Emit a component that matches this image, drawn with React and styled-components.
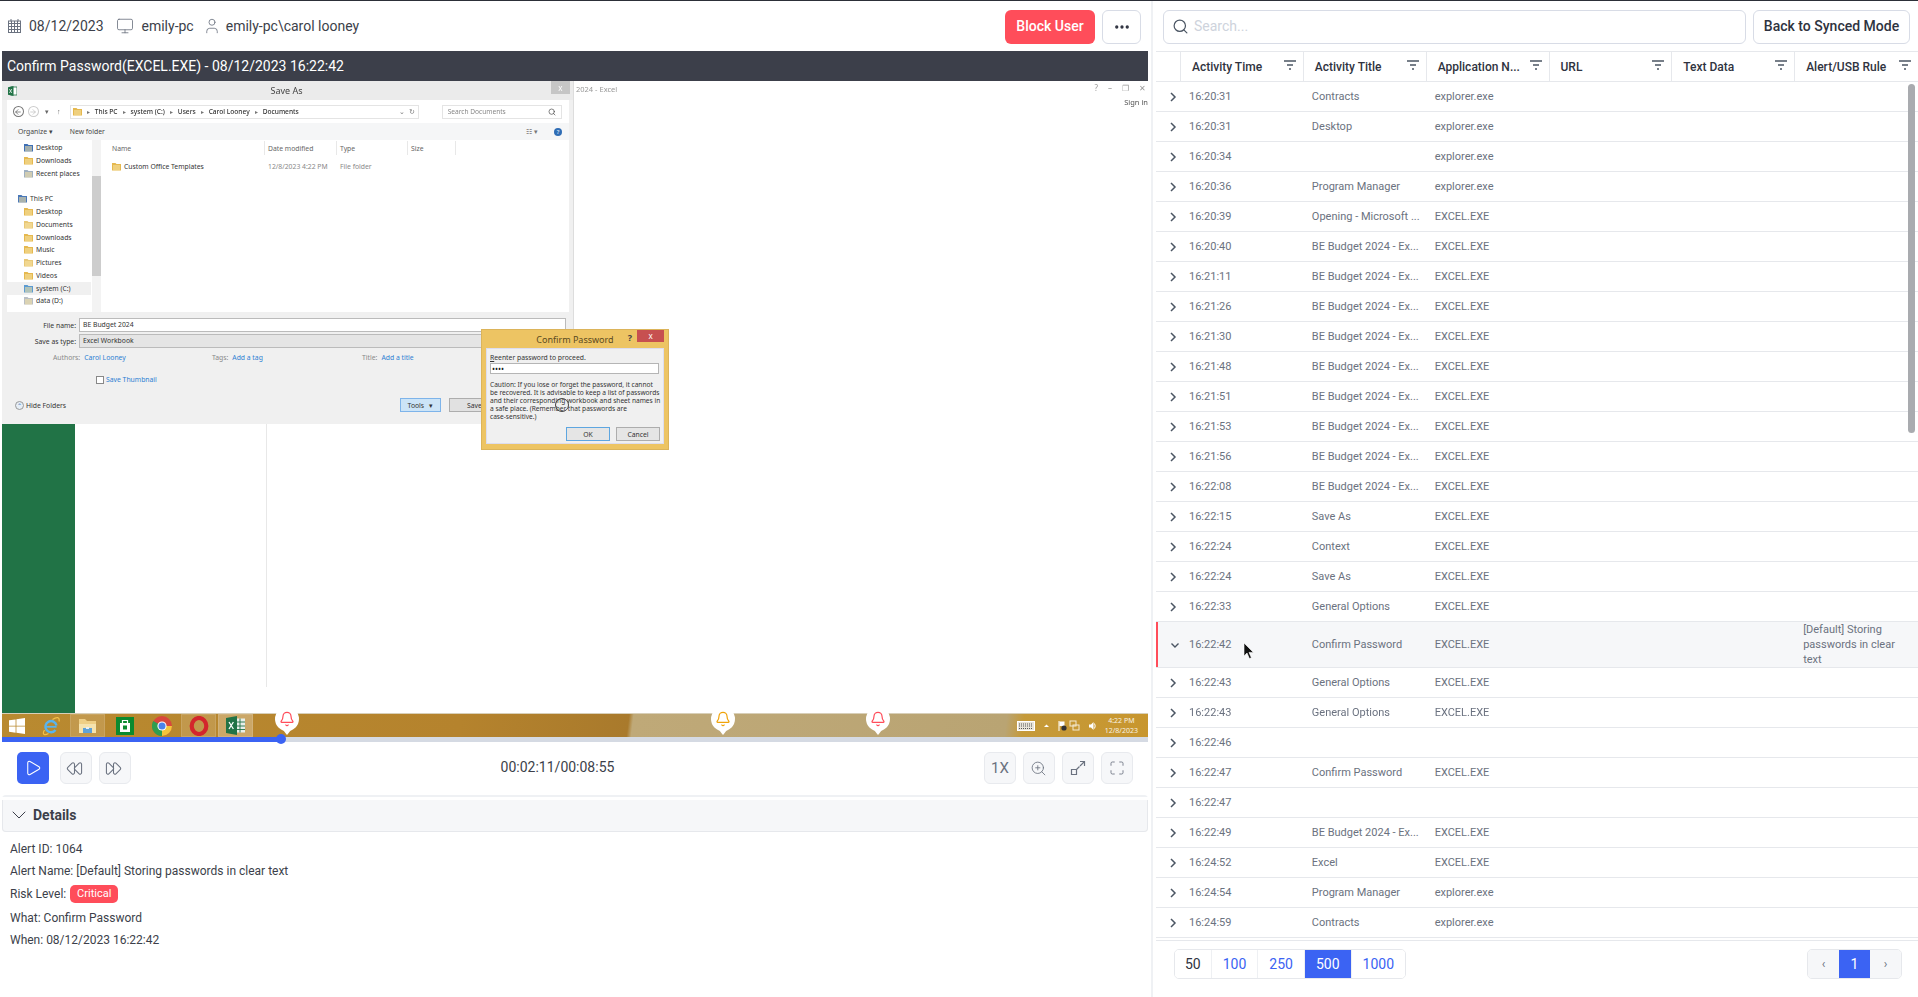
import React from "react";
import styled, { createGlobalStyle } from "styled-components";
import { Monitor, User, Search, Play, Rewind, FastForward, ZoomIn, Maximize, Bell, Ellipsis, ChevronDown, ArrowLeft, ArrowRight } from "lucide-react";

const GlobalStyle = createGlobalStyle`
    html, body {
        margin: 0;
        height: 100%;
        background: #fff;
        overflow: hidden;
    }
    body {
        font-family: Roboto, "Liberation Sans", sans-serif;
        color: #3c3f4a;
    }
    * { box-sizing: border-box; }
`;

const RED = "#ff4d5a";
const BLUE = "#3b63f3";
const LINE = "#e6e8ec";

const BUDGET = "BE Budget 2024 - Ex...";
const EXPLORER = "explorer.exe";
const EXCEL = "EXCEL.EXE";

const rows = [
    ["16:20:31", "Contracts", EXPLORER],
    ["16:20:31", "Desktop", EXPLORER],
    ["16:20:34", "", EXPLORER],
    ["16:20:36", "Program Manager", EXPLORER],
    ["16:20:39", "Opening - Microsoft ...", EXCEL],
    ["16:20:40", BUDGET, EXCEL],
    ["16:21:11", BUDGET, EXCEL],
    ["16:21:26", BUDGET, EXCEL],
    ["16:21:30", BUDGET, EXCEL],
    ["16:21:48", BUDGET, EXCEL],
    ["16:21:51", BUDGET, EXCEL],
    ["16:21:53", BUDGET, EXCEL],
    ["16:21:56", BUDGET, EXCEL],
    ["16:22:08", BUDGET, EXCEL],
    ["16:22:15", "Save As", EXCEL],
    ["16:22:24", "Context", EXCEL],
    ["16:22:24", "Save As", EXCEL],
    ["16:22:33", "General Options", EXCEL],
    ["16:22:42", "Confirm Password", EXCEL, "[Default] Storing passwords in clear text"],
    ["16:22:43", "General Options", EXCEL],
    ["16:22:43", "General Options", EXCEL],
    ["16:22:46", "", ""],
    ["16:22:47", "Confirm Password", EXCEL],
    ["16:22:47", "", ""],
    ["16:22:49", BUDGET, EXCEL],
    ["16:24:52", "Excel", EXCEL],
    ["16:24:54", "Program Manager", EXPLORER],
    ["16:24:59", "Contracts", EXPLORER],
];

const columns = ["Activity Time", "Activity Title", "Application N...", "URL", "Text Data", "Alert/USB Rule"];

const tree = [
    { label: "Desktop", color: "#3f6fb5" },
    { label: "Downloads", color: "#e5b84f" },
    { label: "Recent places", color: "#9fb0c0" },
    { label: "This PC", color: "#4a78b8", gap: true, root: true },
    { label: "Desktop", color: "#e5b84f" },
    { label: "Documents", color: "#e8c877" },
    { label: "Downloads", color: "#e5b84f" },
    { label: "Music", color: "#e5b84f" },
    { label: "Pictures", color: "#e8c877" },
    { label: "Videos", color: "#e5b84f" },
    { label: "system (C:)", color: "#5c9bd1", active: true },
    { label: "data (D:)", color: "#b9bec4" },
];

function CalendarIcon() {
    return (
        <svg width="13" height="14" viewBox="0 0 13 14" fill="none" stroke="#6b7280" strokeWidth="1">
            <rect x="0.5" y="2" width="12" height="11.5" />
            <path d="M0.5 4.5h12M0.5 7.5h12M0.5 10.5h12M3.5 2v11.5M6.5 2v11.5M9.5 2v11.5M3 0v2.5M10 0v2.5" />
        </svg>
    );
}

function FilterIcon() {
    return (
        <svg width="12" height="10" viewBox="0 0 12 10" fill="none" stroke="#4b5563" strokeWidth="1.3">
            <path d="M0 1h12M3 5h6M5 9h2" />
        </svg>
    );
}

function RowChevron({ open }) {
    if (open) {
        return (
            <svg width="10" height="8" viewBox="0 0 10 8" fill="none" stroke="#4b5563" strokeWidth="1.4">
                <path d="M1.5 2.5L5 6l3.5-3.5" />
            </svg>
        );
    }
    return (
        <svg width="8" height="10" viewBox="0 0 8 10" fill="none" stroke="#4b5563" strokeWidth="1.5">
            <path d="M2 1l4 4-4 4" />
        </svg>
    );
}

function ResizeIcon() {
    return (
        <svg width="16" height="16" viewBox="0 0 16 16" fill="none" stroke="#6b7280" strokeWidth="1.2">
            <path d="M1.5 9.5h5v5h-5zM9.5 6.5l-3 3M10 1.5h4.5V6M14.5 1.5L10 6" />
        </svg>
    );
}

function FolderIcon({ color = "#e5b84f" }) {
    return (
        <svg width="9" height="9" viewBox="0 0 9 9">
            <path d="M0 1h3.5l1 1H9v6.5H0z" fill={color} />
            <path d="M1 3h7v5.5H1z" fill="#f7e3a6" opacity="0.55" />
        </svg>
    );
}

function MouseCursor() {
    return (
        <svg width="12" height="17" viewBox="0 0 12 17">
            <path d="M1 0v13l3-3 2.4 5.6 2-.9L6 9.4h4.4z" fill="#111" stroke="#fff" strokeWidth="0.6" />
        </svg>
    );
}

function ExcelBadge({ size = 9 }) {
    return (
        <svg width={size} height={size + 1} viewBox="0 0 9 10">
            <rect x="3" y="1" width="6" height="8" fill="#fff" stroke="#217346" strokeWidth="0.8" />
            <path d="M0 1.2l5.5-1.2v10L0 8.8z" fill="#217346" />
            <path d="M1.4 3l2.4 4M3.8 3L1.4 7" stroke="#fff" strokeWidth="0.7" />
        </svg>
    );
}

function StartLogo() {
    return (
        <svg width="16" height="16" viewBox="0 0 16 16" fill="#fff">
            <path d="M0 2.3l6.6-.9v6.3H0zM7.4 1.3L16 0v7.7H7.4zM0 8.4h6.6v6.3L0 13.8zM7.4 8.4H16V16l-8.6-1.2z" />
        </svg>
    );
}

function IeLogo() {
    return (
        <svg width="20" height="20" viewBox="0 0 20 20" fill="none">
            <path d="M15.5 9.5A5.6 5.6 0 1 0 14.5 14" stroke="#58b4ee" strokeWidth="2.4" />
            <path d="M5 10.8h10.6" stroke="#58b4ee" strokeWidth="1.8" />
            <path d="M3.5 14C1 18 3 20 7.5 17.5M11.5 3.5c4.5-3 7.5-2.5 6.5 2" stroke="#f2c14a" strokeWidth="1.2" />
        </svg>
    );
}

function ExplorerLogo() {
    return (
        <svg width="19" height="18" viewBox="0 0 19 18">
            <path d="M1 2h6l2 2h9v12H1z" fill="#efcf86" />
            <path d="M1 7h17v9H1z" fill="#f6e3ae" />
            <path d="M5 11h9v5H5z" fill="#5fa2d8" />
            <path d="M8 10h3v2H8z" fill="#e9eef3" />
        </svg>
    );
}

function StoreLogo() {
    return (
        <svg width="18" height="18" viewBox="0 0 18 18">
            <rect width="18" height="18" fill="#0b8a2f" />
            <path d="M4 6h10v9H4z" fill="#fff" />
            <path d="M6.5 6V3.5h5V6" stroke="#fff" strokeWidth="1.2" fill="none" />
            <rect x="7" y="8.5" width="4" height="4" fill="#0b8a2f" />
        </svg>
    );
}

function ChromeLogo() {
    return (
        <svg width="20" height="20" viewBox="0 0 20 20">
            <circle cx="10" cy="10" r="10" fill="#d9473c" />
            <path d="M10 10L1.3 5A10 10 0 0 0 10 20z" fill="#2f9e4f" />
            <path d="M10 10h10A10 10 0 0 1 10 20z" fill="#f3c53c" />
            <circle cx="10" cy="10" r="4.6" fill="#fff" />
            <circle cx="10" cy="10" r="3.5" fill="#4c82ea" />
        </svg>
    );
}

function OperaLogo() {
    return (
        <svg width="20" height="20" viewBox="0 0 20 20" fill="none">
            <ellipse cx="10" cy="10" rx="7.3" ry="8" stroke="#d3262c" strokeWidth="4.2" />
        </svg>
    );
}

function ExcelLogo() {
    return (
        <svg width="19" height="19" viewBox="0 0 19 19">
            <rect x="7" y="2.5" width="12" height="14" fill="#e8efe9" />
            <path d="M10 2.5v14M14 2.5v14M7 6h12M7 10h12M7 13.5h12" stroke="#217346" strokeWidth="0.9" />
            <path d="M0 2l11-2v19L0 17z" fill="#217346" />
            <path d="M3 6l4.4 7M7.4 6L3 13" stroke="#fff" strokeWidth="1.3" />
        </svg>
    );
}

function KeyboardIcon() {
    return (
        <svg width="18" height="10" viewBox="0 0 18 10">
            <rect x="0.5" y="0.5" width="17" height="9" fill="#e8e4d8" stroke="#fff" />
            <path d="M2 3h14M2 5h14M2 7.5h14" stroke="#555" strokeDasharray="1 1" strokeWidth="1" />
        </svg>
    );
}

function TrayGlyphs() {
    return (
        <svg width="52" height="12" viewBox="0 0 52 12">
            <path d="M0 7l2.5-2.5L5 7z" fill="#fff" />
            <path d="M15 1v10" stroke="#fff" strokeWidth="1" />
            <path d="M15.5 1.5h5v4.5h-5z" fill="#fff" />
            <circle cx="20" cy="8" r="2.6" fill="#333" />
            <rect x="26" y="1" width="6" height="5" fill="none" stroke="#f4ead2" />
            <rect x="29" y="5" width="6" height="5" fill="none" stroke="#f4ead2" />
            <path d="M45 4.5h2l2.5-2.5v8L47 7.5h-2z" fill="#fff" />
            <path d="M50.5 3.5q1.4 2.5 0 5" stroke="#fff" fill="none" />
        </svg>
    );
}

export default function App() {
    return (
        <Page>
            <GlobalStyle />
            <LeftPanel>
                <TopBar>
                    <SessionInfo>
                        <InfoItem><CalendarIcon />08/12/2023</InfoItem>
                        <InfoItem><Monitor size={18} strokeWidth={1.1} color="#6b7280" />emily-pc</InfoItem>
                        <InfoItem><UserGlyph size={18} strokeWidth={1.1} color="#6b7280" />emily-pc\carol looney</InfoItem>
                    </SessionInfo>
                    <TopActions>
                        <DangerButton>Block User</DangerButton>
                        <MoreButton><Ellipsis size={18} strokeWidth={2.4} color="#2f3340" /></MoreButton>
                    </TopActions>
                </TopBar>

                <ScreenTitle>Confirm Password(EXCEL.EXE) - 08/12/2023 16:22:42</ScreenTitle>
                <Screen>
                    <Desktop>
                        <ExcelBack>
                            <ExcelTitleText>2024 - Excel</ExcelTitleText>
                            <ExcelWindowControls>
                                <span>?</span><span>–</span><span>❐</span><span>✕</span>
                            </ExcelWindowControls>
                            <SignIn>Sign in</SignIn>
                            <ExcelSideBar />
                            <ExcelRule />
                        </ExcelBack>

                        <SaveWindow>
                            <WinTitle>
                                <ExcelBadge />
                                <WinTitleText>Save As</WinTitleText>
                                <WinClose>x</WinClose>
                            </WinTitle>
                            <NavBar>
                                <NavCircle><ArrowLeft size={8} strokeWidth={2} color="#555" /></NavCircle>
                                <NavCircle $faded><ArrowRight size={8} strokeWidth={2} color="#bbb" /></NavCircle>
                                <NavArrow>▾</NavArrow>
                                <NavArrow>↑</NavArrow>
                                <AddressBox>
                                    <FolderIcon />
                                    <Crumb>▸</Crumb><b>This PC</b>
                                    <Crumb>▸</Crumb><b>system (C:)</b>
                                    <Crumb>▸</Crumb><b>Users</b>
                                    <Crumb>▸</Crumb><b>Carol Looney</b>
                                    <Crumb>▸</Crumb><b>Documents</b>
                                    <AddressEnd>⌄ &nbsp;↻</AddressEnd>
                                </AddressBox>
                                <SearchBox>Search Documents<Search size={8} strokeWidth={2} color="#444" /></SearchBox>
                            </NavBar>
                            <WinToolbar>
                                <span>Organize ▾</span>
                                <span>New folder</span>
                                <ToolbarEnd>
                                    <span>☷ ▾</span>
                                    <HelpDot>?</HelpDot>
                                </ToolbarEnd>
                            </WinToolbar>
                            <Browser>
                                <TreePane>
                                    {tree.map((item, index) => (
                                        <TreeItem key={index} $gap={item.gap} $root={item.root} $active={item.active}>
                                            <FolderIcon color={item.color} />{item.label}
                                        </TreeItem>
                                    ))}
                                    <TreeScroll><TreeThumb /></TreeScroll>
                                </TreePane>
                                <FilePane>
                                    <FileHead>
                                        <FileCol $w={153}>Name</FileCol>
                                        <FileCol $w={69}>Date modified</FileCol>
                                        <FileCol $w={68}>Type</FileCol>
                                        <FileCol $w={45}>Size</FileCol>
                                    </FileHead>
                                    <FileRow>
                                        <FileName $w={153}><FolderIcon />Custom Office Templates</FileName>
                                        <FileMeta $w={69}>12/8/2023 4:22 PM</FileMeta>
                                        <FileMeta $w={68}>File folder</FileMeta>
                                    </FileRow>
                                </FilePane>
                            </Browser>
                            <SaveForm>
                                <FormRow>
                                    <FormLabel>File name:</FormLabel>
                                    <FormInput><span>BE Budget 2024</span></FormInput>
                                </FormRow>
                                <FormRow>
                                    <FormLabel>Save as type:</FormLabel>
                                    <FormInput $select><span>Excel Workbook</span></FormInput>
                                </FormRow>
                                <MetaRow>
                                    <MetaCell $w={159}><MetaLabel>Authors:</MetaLabel><MetaLink>Carol Looney</MetaLink></MetaCell>
                                    <MetaCell $w={150}><MetaLabel>Tags:</MetaLabel><MetaLink>Add a tag</MetaLink></MetaCell>
                                    <MetaCell $w={100}><MetaLabel>Title:</MetaLabel><MetaLink>Add a title</MetaLink></MetaCell>
                                </MetaRow>
                                <ThumbRow><ThumbBox /><MetaLink>Save Thumbnail</MetaLink></ThumbRow>
                                <FormFooter>
                                    <HideFolders><HideDot>⌃</HideDot>Hide Folders</HideFolders>
                                    <FormButtons>
                                        <WinButton $tools>Tools &nbsp; ▾</WinButton>
                                        <WinButton>Save</WinButton>
                                    </FormButtons>
                                </FormFooter>
                            </SaveForm>
                        </SaveWindow>

                        <ConfirmDialog>
                            <DialogTitle>
                                <DialogTitleText>Confirm Password</DialogTitleText>
                                <DialogHelp>?</DialogHelp>
                                <DialogClose>x</DialogClose>
                            </DialogTitle>
                            <DialogBody>
                                <DialogLine><u>R</u>eenter password to proceed.</DialogLine>
                                <DialogInput>••••</DialogInput>
                                <DialogNote>
                                    Caution: If you lose or forget the password, it cannot<br />
                                    be recovered. It is advisable to keep a list of passwords<br />
                                    and their corresponding workbook and sheet names in<br />
                                    a safe place.  (Remember that passwords are<br />
                                    case-sensitive.)
                                </DialogNote>
                                <DialogButtons>
                                    <DialogButton $primary>OK</DialogButton>
                                    <DialogButton>Cancel</DialogButton>
                                </DialogButtons>
                            </DialogBody>
                        </ConfirmDialog>
                        <CursorRing />
                    </Desktop>
                    <Taskbar>
                        <TaskSlot $w={30}><StartLogo /></TaskSlot>
                        <TaskSlot><IeLogo /></TaskSlot>
                        <TaskSlot $on><ExplorerLogo /></TaskSlot>
                        <TaskSlot><StoreLogo /></TaskSlot>
                        <TaskSlot><ChromeLogo /></TaskSlot>
                        <TaskSlot $on><OperaLogo /></TaskSlot>
                        <TaskSlot $on $light><ExcelLogo /></TaskSlot>
                        <Tray>
                            <KeyboardIcon />
                            <TrayGlyphs />
                            <TrayClock>4:22 PM<br />12/8/2023</TrayClock>
                        </Tray>
                    </Taskbar>
                </Screen>

                <Progress>
                    <ProgressFill />
                    <Marker $x={272.5}><Bell size={16} strokeWidth={1.8} color={RED} /></Marker>
                    <Marker $x={709}><Bell size={16} strokeWidth={1.8} color="#f0a30a" /></Marker>
                    <Marker $x={864}><Bell size={16} strokeWidth={1.8} color={RED} /></Marker>
                </Progress>

                <Controls>
                    <ControlGroup>
                        <PlayButton><Play size={18} strokeWidth={1.4} color="#fff" /></PlayButton>
                        <SeekButton $nudge><Rewind size={17} strokeWidth={1.5} color="#6b7280" /></SeekButton>
                        <SeekButton $nudge><FastForward size={17} strokeWidth={1.5} color="#6b7280" /></SeekButton>
                    </ControlGroup>
                    <TimeText>00:02:11/00:08:55</TimeText>
                    <ControlGroup>
                        <SeekButton $text>1X</SeekButton>
                        <SeekButton><ZoomIn size={17} strokeWidth={1.2} color="#6b7280" /></SeekButton>
                        <SeekButton><ResizeIcon /></SeekButton>
                        <SeekButton><Maximize size={16} strokeWidth={1.3} color="#6b7280" /></SeekButton>
                    </ControlGroup>
                </Controls>

                <DetailsHeader>
                    <ChevronDown size={24} strokeWidth={1} color="#3c3f4a" />
                    Details
                </DetailsHeader>
                <DetailsBody>
                    <DetailLine>Alert ID: 1064</DetailLine>
                    <DetailLine>Alert Name: [Default] Storing passwords in clear text</DetailLine>
                    <RiskLine>Risk Level: <RiskBadge>Critical</RiskBadge></RiskLine>
                    <DetailLine>What: Confirm Password</DetailLine>
                    <DetailLine>When: 08/12/2023 16:22:42</DetailLine>
                </DetailsBody>
            </LeftPanel>

            <RightPanel>
                <SearchBar>
                    <SearchField>
                        <Search size={17} strokeWidth={1.7} color="#4b5563" />
                        <SearchPlaceholder>Search...</SearchPlaceholder>
                    </SearchField>
                    <OutlineButton>Back to Synced Mode</OutlineButton>
                </SearchBar>

                <TableWrap>
                    <HeadRow>
                        <HeadCell />
                        {columns.map((title) => (
                            <HeadCell key={title}>
                                <span>{title}</span>
                                <FilterIcon />
                            </HeadCell>
                        ))}
                    </HeadRow>
                    <TableBody>
                        {rows.map(([time, title, app, alert], index) => (
                            <Row key={index} $open={Boolean(alert)}>
                                <ChevronCell $open={Boolean(alert)}><RowChevron open={Boolean(alert)} /></ChevronCell>
                                <Cell>{time}</Cell>
                                <Cell>{title}</Cell>
                                <Cell>{app}</Cell>
                                <Cell />
                                <Cell />
                                <AlertCell>{alert}</AlertCell>
                            </Row>
                        ))}
                        <ScrollThumb />
                        <CursorSpot><MouseCursor /></CursorSpot>
                    </TableBody>
                </TableWrap>

                <TableFooter>
                    <PageSizes>
                        <SizeButton $plain>50</SizeButton>
                        <SizeButton>100</SizeButton>
                        <SizeButton>250</SizeButton>
                        <SizeButton $active>500</SizeButton>
                        <SizeButton $last>1000</SizeButton>
                    </PageSizes>
                    <Pager>
                        <PagerArrow>‹</PagerArrow>
                        <PagerCurrent>1</PagerCurrent>
                        <PagerArrow>›</PagerArrow>
                    </Pager>
                </TableFooter>
            </RightPanel>
        </Page>
    );
}

const Page = styled.div`
    display: flex;
    width: 1918px;
    height: 997px;
    border-top: 1px solid #2c2f38;
    overflow: hidden;
`;

const LeftPanel = styled.div`
    width: 1153px;
    flex: none;
    display: flex;
    flex-direction: column;
    padding: 0 3px 0 2px;
    border-right: 2px solid #eff1f4;
`;

const TopBar = styled.div`
    height: 50px;
    flex: none;
    display: flex;
    align-items: flex-start;
    justify-content: space-between;
    padding: 9px 7px 0 6px;
`;

const SessionInfo = styled.div`
    display: flex;
    align-items: center;
    height: 32px;
    gap: 12px;
`;

const InfoItem = styled.div`
    display: flex;
    align-items: center;
    gap: 8px;
    font-size: 14px;
    color: #3c3f4a;
`;

const UserGlyph = styled(User)`
    margin: 0 -3px 0 -3px;
`;

const TopActions = styled.div`
    display: flex;
    gap: 7px;
`;

const DangerButton = styled.button`
    width: 90px;
    height: 34px;
    padding: 0 0 2px;
    border: 0;
    border-radius: 6px;
    background: ${RED};
    color: #fff;
    font: 500 14px Roboto, sans-serif;
`;

const MoreButton = styled.button`
    width: 39px;
    height: 34px;
    display: flex;
    align-items: center;
    justify-content: center;
    background: #fff;
    border: 1px solid #d8dce6;
    border-radius: 6px;
`;

const ScreenTitle = styled.div`
    height: 30px;
    flex: none;
    display: flex;
    align-items: center;
    padding-left: 5px;
    background: #3c3f4a;
    color: #fff;
    font-size: 14px;
`;

const Screen = styled.div`
    height: 656px;
    flex: none;
    display: flex;
    flex-direction: column;
    font-family: "Noto Sans", sans-serif;
    overflow: hidden;
`;

const Desktop = styled.div`
    position: relative;
    flex: 1;
    background: #fff;
    filter: blur(0.3px);
`;

const ExcelBack = styled.div`
    position: absolute;
    inset: 0;
`;

const ExcelTitleText = styled.span`
    position: absolute;
    left: 574px;
    top: 3px;
    font-size: 7.5px;
    color: #999;
`;

const ExcelWindowControls = styled.div`
    position: absolute;
    right: 2px;
    top: 1px;
    display: flex;
    gap: 10px;
    font-size: 8px;
    color: #999;
`;

const SignIn = styled.span`
    position: absolute;
    right: 0;
    top: 16px;
    font-size: 7.5px;
    color: #555;
`;

const ExcelSideBar = styled.div`
    position: absolute;
    left: 0;
    top: 343px;
    bottom: 0;
    width: 73px;
    background: #217346;
`;

const ExcelRule = styled.div`
    position: absolute;
    left: 264px;
    top: 343px;
    height: 263px;
    width: 1px;
    background: #e8e8e8;
`;

const SaveWindow = styled.div`
    position: absolute;
    left: 0;
    top: 0;
    width: 572px;
    height: 343px;
    display: flex;
    flex-direction: column;
    background: #f0f0f0;
    padding: 0 4px 0 5px;
    border-right: 1px solid #ddd;
    font-size: 6.8px;
    color: #333;
`;

const WinTitle = styled.div`
    height: 19px;
    margin: 0 -4px 0 -5px;
    padding-left: 6px;
    flex: none;
    display: flex;
    align-items: center;
    justify-content: space-between;
    background: #ebebeb;
`;

const WinTitleText = styled.span`
    font-size: 9px;
    color: #444;
    margin-left: 5px;
`;

const WinClose = styled.span`
    align-self: flex-start;
    width: 19px;
    height: 13px;
    margin-right: 3px;
    display: flex;
    align-items: center;
    justify-content: center;
    background: #c6c6c6;
    color: #fff;
    font-size: 8px;
`;

const NavBar = styled.div`
    height: 23px;
    flex: none;
    display: flex;
    align-items: center;
    gap: 4px;
    padding: 0 7px 0 6px;
    background: #fff;
`;

const NavCircle = styled.span`
    width: 11px;
    height: 11px;
    border-radius: 50%;
    border: 1px solid ${(props) => (props.$faded ? "#ccc" : "#777")};
    display: flex;
    align-items: center;
    justify-content: center;
`;

const NavArrow = styled.span`
    width: 8px;
    text-align: center;
    font-size: 7px;
    color: #666;
`;

const AddressBox = styled.div`
    width: 351px;
    height: 14px;
    margin-left: 3px;
    display: flex;
    align-items: center;
    gap: 5px;
    padding-left: 2px;
    border: 1px solid #e4e4e4;
    font-size: 6.6px;
    color: #333;
    b { font-weight: 500; }
`;

const Crumb = styled.span`
    color: #777;
    font-size: 6px;
`;

const AddressEnd = styled.span`
    margin-left: auto;
    margin-right: 3px;
    color: #777;
`;

const SearchBox = styled.div`
    width: 121px;
    height: 14px;
    margin-left: 19px;
    display: flex;
    align-items: center;
    justify-content: space-between;
    padding: 0 5px;
    border: 1px solid #e4e4e4;
    font-size: 6.6px;
    color: #888;
`;

const WinToolbar = styled.div`
    height: 17px;
    flex: none;
    display: flex;
    align-items: center;
    gap: 17px;
    padding: 0 7px 0 11px;
    background: #f5f6f7;
    color: #444;
`;

const ToolbarEnd = styled.div`
    margin-left: auto;
    display: flex;
    align-items: center;
    gap: 16px;
    color: #777;
`;

const HelpDot = styled.span`
    width: 8px;
    height: 8px;
    border-radius: 50%;
    background: #2f6db5;
    color: #fff;
    font-size: 6px;
    line-height: 8px;
    text-align: center;
`;

const Browser = styled.div`
    height: 172px;
    flex: none;
    display: flex;
    background: #fff;
`;

const TreePane = styled.div`
    position: relative;
    width: 94px;
    flex: none;
    padding-top: 1.5px;
`;

const TreeItem = styled.div`
    height: 12.75px;
    display: flex;
    align-items: center;
    gap: 3px;
    width: 84px;
    margin-top: ${(props) => (props.$gap ? "12.75px" : "0")};
    padding-left: ${(props) => (props.$root ? "11px" : "17px")};
    background: ${(props) => (props.$active ? "#f0f0f0" : "transparent")};
    white-space: nowrap;
`;

const TreeScroll = styled.div`
    position: absolute;
    right: 0;
    top: 0;
    bottom: 0;
    width: 9px;
    background: #f3f3f3;
`;

const TreeThumb = styled.div`
    margin-top: 36px;
    height: 100px;
    background: #cdcdcd;
`;

const FilePane = styled.div`
    flex: 1;
    padding: 0 0 0 11px;
`;

const FileHead = styled.div`
    height: 18px;
    display: flex;
    align-items: flex-end;
    padding-bottom: 3px;
    color: #666;
`;

const FileCol = styled.div`
    width: ${(props) => props.$w}px;
    height: 14px;
    line-height: 15px;
    border-right: 1px solid #e8e8e8;
    padding-right: 3px;
    margin-right: 3px;
`;

const FileRow = styled.div`
    display: flex;
    align-items: center;
    height: 16px;
`;

const FileName = styled.div`
    width: ${(props) => props.$w + 3}px;
    display: flex;
    align-items: center;
    gap: 3px;
    color: #333;
`;

const FileMeta = styled.div`
    width: ${(props) => props.$w + 3}px;
    color: #888;
    white-space: nowrap;
`;

const SaveForm = styled.div`
    flex: 1;
    padding-top: 6px;
    background: #f0f0f0;
`;

const FormRow = styled.div`
    display: flex;
    align-items: center;
    height: 14px;
    margin-bottom: 2px;
`;

const FormLabel = styled.label`
    width: 72px;
    text-align: right;
    padding-right: 3px;
    color: #333;
`;

const FormInput = styled.div`
    width: 487px;
    height: 14px;
    padding-left: 3px;
    line-height: 12px;
    border: 1px solid #bbb;
    background: ${(props) => (props.$select ? "#e5e5e5" : "#fff")};
    color: #333;
`;

const MetaRow = styled.div`
    display: flex;
    margin-top: 5px;
    padding-left: 46px;
`;

const MetaCell = styled.div`
    width: ${(props) => props.$w}px;
    display: flex;
    gap: 4px;
`;

const MetaLabel = styled.span`
    color: #888;
`;

const MetaLink = styled.span`
    color: #2d7fd3;
`;

const ThumbRow = styled.div`
    display: flex;
    align-items: center;
    gap: 2px;
    margin-top: 13px;
    padding-left: 89px;
`;

const ThumbBox = styled.span`
    width: 8px;
    height: 8px;
    background: #fff;
    border: 1px solid #888;
`;

const FormFooter = styled.div`
    display: flex;
    align-items: center;
    justify-content: space-between;
    margin-top: 14px;
    padding-left: 8px;
`;

const HideFolders = styled.div`
    display: flex;
    align-items: center;
    gap: 2px;
    color: #333;
`;

const HideDot = styled.span`
    width: 9px;
    height: 9px;
    border-radius: 50%;
    border: 1px solid #999;
    background: #e6eef6;
    font-size: 6px;
    line-height: 9px;
    text-align: center;
    color: #2f6db5;
`;

const FormButtons = styled.div`
    display: flex;
    gap: 8px;
    margin-right: 8px;
`;

const WinButton = styled.div`
    width: ${(props) => (props.$tools ? "41px" : "112px")};
    height: 14px;
    display: flex;
    align-items: center;
    justify-content: ${(props) => (props.$tools ? "center" : "flex-start")};
    padding-left: ${(props) => (props.$tools ? "0" : "17px")};
    background: ${(props) => (props.$tools ? "#cce4f7" : "#e1e1e1")};
    border: 1px solid ${(props) => (props.$tools ? "#7eb4ea" : "#adadad")};
`;

const ConfirmDialog = styled.div`
    position: absolute;
    left: 479px;
    top: 248px;
    width: 188px;
    height: 121px;
    display: flex;
    flex-direction: column;
    background: #edc463;
    border: 1px solid #dcb45a;
    padding: 0 4px 5px 4px;
    color: #333;
    font-size: 6.8px;
`;

const DialogTitle = styled.div`
    position: relative;
    height: 18px;
    flex: none;
    display: flex;
    align-items: center;
    justify-content: center;
`;

const DialogTitleText = styled.span`
    font-size: 9px;
    color: #5a4a1f;
`;

const DialogHelp = styled.span`
    position: absolute;
    right: 32px;
    top: 1px;
    font-size: 9px;
    font-weight: 700;
    color: #444;
`;

const DialogClose = styled.span`
    position: absolute;
    right: 0;
    top: 0;
    width: 27px;
    height: 12px;
    background: #c75050;
    color: #fff;
    font-size: 8px;
    line-height: 11px;
    text-align: center;
`;

const DialogBody = styled.div`
    flex: 1;
    padding: 4px 3px 0 3px;
    background: #f0f0f0;
    border: 1px solid #dde;
`;

const DialogLine = styled.div`
    height: 10px;
    line-height: 10px;
`;

const DialogInput = styled.div`
    height: 11px;
    margin: 0 1px 7px 0;
    padding-left: 1px;
    background: #fff;
    border: 1px solid #b5b5b5;
    font-size: 8px;
    line-height: 9px;
    color: #222;
`;

const DialogNote = styled.div`
    line-height: 8px;
    font-size: 6.6px;
    white-space: nowrap;
`;

const DialogButtons = styled.div`
    display: flex;
    justify-content: flex-end;
    gap: 6px;
    margin-top: 6px;
`;

const DialogButton = styled.div`
    width: 44px;
    height: 14px;
    display: flex;
    align-items: center;
    justify-content: center;
    background: #e5e5e5;
    border: 1px solid ${(props) => (props.$primary ? "#5ea6e0" : "#adadad")};
`;

const CursorRing = styled.div`
    position: absolute;
    left: 553px;
    top: 317px;
    width: 14px;
    height: 14px;
    border-radius: 50%;
    border: 1px solid #444;
`;

const Taskbar = styled.div`
    height: 24px;
    flex: none;
    display: flex;
    align-items: stretch;
    border-top: 1px solid #d8cfb8;
    background: linear-gradient(97deg, #b98a30 0, #b5832d 40%, #a97a2c 54.6%, #bfa978 55%, #b9a473 87.5%, #c59a3a 89%, #c8962e 100%);
`;

const TaskSlot = styled.div`
    width: ${(props) => (props.$w || 37) - (props.$on ? 2 : 0)}px;
    flex: none;
    display: flex;
    align-items: center;
    justify-content: center;
    box-shadow: ${(props) => (props.$on ? "inset 0 0 0 1px rgba(255,255,255,0.12)" : "none")};
    margin: 0 ${(props) => (props.$on ? "1px" : "0")};
    background: ${(props) => {
        if (props.$light) return "rgba(255,255,255,0.28)";
        return props.$on ? "rgba(255,255,255,0.14)" : "transparent";
    }};
`;

const Tray = styled.div`
    margin-left: auto;
    display: flex;
    align-items: center;
    gap: 9px;
    padding-right: 10px;
`;

const TrayClock = styled.div`
    font-size: 7px;
    line-height: 10px;
    text-align: center;
    color: #f8f2e2;
`;

const Progress = styled.div`
    position: relative;
    height: 5px;
    flex: none;
    background: #d5dae3;
`;

const ProgressFill = styled.div`
    position: relative;
    width: 279px;
    height: 100%;
    background: ${BLUE};
    &::after {
        content: "";
        position: absolute;
        right: -5px;
        top: -3px;
        width: 10px;
        height: 10px;
        border-radius: 50%;
        background: ${BLUE};
    }
`;

const Marker = styled.div`
    position: absolute;
    left: ${(props) => props.$x}px;
    top: -30px;
    width: 24px;
    height: 24px;
    display: flex;
    align-items: center;
    justify-content: center;
    border-radius: 50%;
    background: #fff;
    &::after {
        content: "";
        position: absolute;
        left: 8px;
        bottom: -4px;
        border-top: 5px solid #fff;
        border-left: 4px solid transparent;
        border-right: 4px solid transparent;
    }
`;

const Controls = styled.div`
    height: 53px;
    flex: none;
    display: flex;
    align-items: flex-start;
    justify-content: space-between;
    padding: 10px 15px 0;
`;

const ControlGroup = styled.div`
    display: flex;
    gap: 7px;
    &:first-child > :first-child { margin-right: 4px; }
`;

const PlayButton = styled.button`
    width: 32px;
    height: 32px;
    display: flex;
    align-items: center;
    justify-content: center;
    padding: 0;
    background: ${BLUE};
    border: 0;
    border-radius: 5px;
`;

const SeekButton = styled.button`
    width: 32px;
    height: 32px;
    display: flex;
    align-items: center;
    justify-content: center;
    padding: 0 ${(props) => (props.$nudge ? "3px" : "0")} 0 0;
    background: #f6f7f9;
    border: 1px solid #e8eaee;
    border-radius: 6px;
    color: #6b7280;
    font: ${(props) => (props.$text ? "400 15px Roboto, sans-serif" : "inherit")};
`;

const TimeText = styled.div`
    margin-top: 7px;
    font-size: 14px;
    color: #3c3f4a;
`;

const DetailsHeader = styled.div`
    position: relative;
    height: 37px;
    flex: none;
    display: flex;
    align-items: center;
    gap: 2px;
    padding-left: 5px;
    border-top: 2px solid #eff1f4;
    background: #f6f7f9;
    border-radius: 4px;
    font-size: 14px;
    font-weight: 700;
    color: #3c3f4a;
    box-shadow: inset 0 0 0 1px #e6e8ec;
    background-clip: padding-box;
    &::before {
        content: "";
        position: absolute;
        left: 0;
        right: 0;
        top: 0;
        height: 3px;
        background: #fff;
    }
`;

const DetailsBody = styled.div`
    display: flex;
    flex-direction: column;
    gap: 8px;
    padding: 10px 0 0 8px;
`;

const DetailLine = styled.div`
    display: flex;
    align-items: center;
    gap: 4px;
    min-height: 14px;
    font-size: 12px;
    line-height: 14px;
    color: #3c3f4a;
`;

const RiskLine = styled(DetailLine)`
    margin-top: -1px;
`;

const RiskBadge = styled.span`
    width: 48px;
    height: 18px;
    display: flex;
    align-items: center;
    justify-content: center;
    border-radius: 5px;
    background: ${RED};
    color: #fff;
    font-size: 11px;
`;

const RightPanel = styled.div`
    flex: 1;
    min-width: 0;
    display: flex;
    flex-direction: column;
`;

const SearchBar = styled.div`
    height: 50px;
    flex: none;
    display: flex;
    gap: 7px;
    padding: 9px 8px 0 10px;
`;

const SearchField = styled.div`
    flex: 1;
    height: 34px;
    display: flex;
    align-items: center;
    gap: 5px;
    padding: 0 0 1px 8px;
    border: 1px solid #d8dce6;
    border-radius: 6px;
`;

const SearchPlaceholder = styled.span`
    font-size: 14px;
    color: #ced3dc;
    margin-top: -1px;
`;

const OutlineButton = styled.button`
    width: 157px;
    height: 34px;
    padding: 0 0 2px;
    background: #fff;
    border: 1px solid #d8dce6;
    border-radius: 6px;
    font: 500 14px Roboto, sans-serif;
    color: #2f3340;
`;

const TableWrap = styled.div`
    margin-left: 3px;
    flex: none;
    border-top: 1px solid ${LINE};
`;

const HeadRow = styled.div`
    display: grid;
    grid-template-columns: 25px repeat(6, 1fr);
    height: 30px;
    border-bottom: 1px solid ${LINE};
`;

const HeadCell = styled.div`
    display: flex;
    align-items: center;
    justify-content: space-between;
    padding: 0 7px 0 11px;
    border-right: 1px solid ${LINE};
    font-size: 12px;
    font-weight: 500;
    color: #2f3340;
    white-space: nowrap;
    svg { margin-top: -3px; }
    &:last-child { border-right: 0; }
`;

const TableBody = styled.div`
    position: relative;
    height: 856px;
    overflow: hidden;
`;

const Row = styled.div`
    display: grid;
    grid-template-columns: 25px repeat(6, 1fr);
    align-items: center;
    height: ${(props) => (props.$open ? "46px" : "30px")};
    border-bottom: 1px solid ${LINE};
    background: ${(props) => (props.$open ? "#f6f7f9" : "#fff")};
    box-shadow: ${(props) => (props.$open ? `inset 2px 0 0 ${RED}` : "none")};
    font-size: 11px;
    color: #6b7280;
`;

const ChevronCell = styled.div`
    display: flex;
    padding-left: ${(props) => (props.$open ? "14px" : "13px")};
`;

const Cell = styled.div`
    padding-left: 8px;
    white-space: nowrap;
    overflow: hidden;
`;

const AlertCell = styled.div`
    padding: 0 8px;
    line-height: 15px;
`;

const ScrollThumb = styled.div`
    position: absolute;
    right: 3px;
    top: 2px;
    width: 7px;
    height: 349px;
    border-radius: 4px;
    background: #a9abaf;
`;

const CursorSpot = styled.div`
    position: absolute;
    left: 87px;
    top: 561px;
    line-height: 0;
`;

const TableFooter = styled.div`
    margin: 2px 0 0 3px;
    padding: 8px 16px 0 18px;
    display: flex;
    align-items: flex-start;
    justify-content: space-between;
    border-top: 1px solid ${LINE};
`;

const PageSizes = styled.div`
    display: flex;
    height: 30px;
    border: 1px solid ${LINE};
    border-radius: 5px;
    overflow: hidden;
`;

const SizeButton = styled.button`
    padding: 0 ${(props) => (props.$plain ? "10px" : "11px")};
    border: 0;
    border-right: ${(props) => (props.$last ? "0" : "1px solid #eef0f3")};
    background: ${(props) => (props.$active ? BLUE : "#fff")};
    color: ${(props) => {
        if (props.$active) return "#fff";
        return props.$plain ? "#2f3340" : BLUE;
    }};
    font: 400 14px Roboto, sans-serif;
`;

const Pager = styled.div`
    display: flex;
    height: 30px;
    border: 1px solid ${LINE};
    border-radius: 5px;
    overflow: hidden;
`;

const PagerArrow = styled.button`
    width: 31px;
    padding: 0;
    border: 0;
    background: #f6f7f9;
    color: #6b7280;
    font: 400 12px Roboto, sans-serif;
`;

const PagerCurrent = styled.button`
    width: 31px;
    padding: 0;
    border: 0;
    background: ${BLUE};
    color: #fff;
    font: 400 14px Roboto, sans-serif;
`;
